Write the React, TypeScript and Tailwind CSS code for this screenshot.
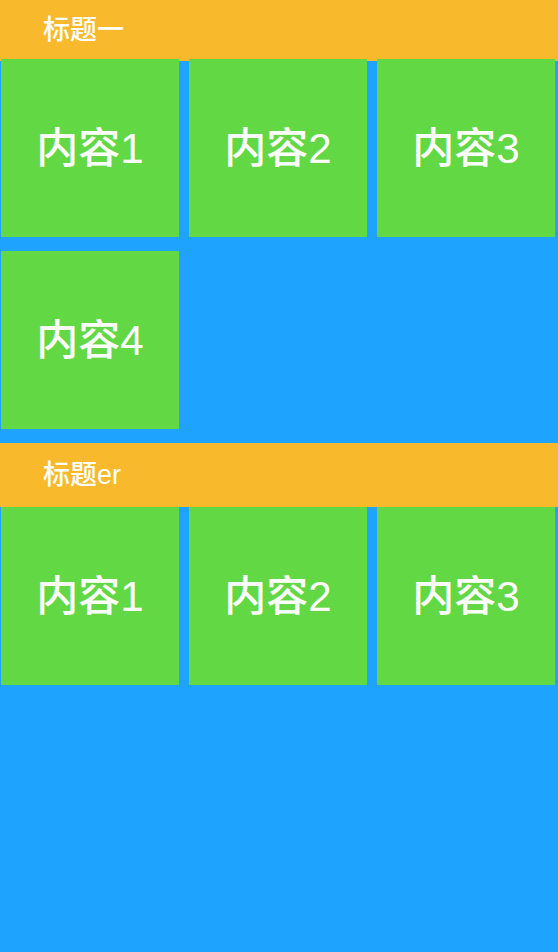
const font = { fontFamily: '"Liberation Sans", "Noto Sans CJK SC", sans-serif' };

function Cell({ label }: { label: string }) {
  return (
    <div className="flex h-[178px] w-[178px] items-center justify-center bg-[#63d845] text-[42px] font-medium text-white">
      {label}
    </div>
  );
}

function Section({
  title,
  items,
  headerClass,
  gridClass,
}: {
  title: string;
  items: string[];
  headerClass: string;
  gridClass: string;
}) {
  return (
    <section>
      <div className={`flex items-center bg-[#f8b92c] pl-[43px] text-[27px] font-medium text-white ${headerClass}`}>
        {title}
      </div>
      <div className={`relative ml-[1px] flex flex-wrap gap-x-[10px] gap-y-[14px] ${gridClass}`}>
        {items.map((label, i) => (
          <Cell key={i} label={label} />
        ))}
      </div>
    </section>
  );
}

export default function App() {
  return (
    <div className="min-h-[952px] w-full bg-[#1ea3ff]" style={font}>
      <Section
        title="标题一"
        items={['内容1', '内容2', '内容3', '内容4']}
        headerClass="h-[61px]"
        gridClass="-mt-[2px] mb-[14px]"
      />
      <Section
        title="标题er"
        items={['内容1', '内容2', '内容3']}
        headerClass="h-[64px]"
        gridClass=""
      />
    </div>
  );
}
